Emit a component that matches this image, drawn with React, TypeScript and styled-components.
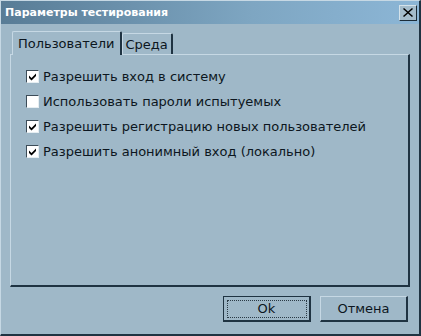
import styled, { createGlobalStyle } from "styled-components";

const GlobalStyle = createGlobalStyle`
  html, body {
    margin: 0;
    padding: 0;
    background: #9fb8c8;
  }
  * {
    box-sizing: border-box;
  }
`;

const Window = styled.div`
  width: 421px;
  height: 336px;
  display: flex;
  flex-direction: column;
  background: #9fb8c8;
  border-top: 1px solid #c6d8e4;
  border-left: 1px solid #c6d8e4;
  border-right: 2px solid #1f3342;
  border-bottom: 2px solid #1f3342;
  font-family: "DejaVu Sans", Verdana, sans-serif;
  color: #0c1620;
`;

const TitleBar = styled.div`
  height: 23px;
  display: flex;
  align-items: center;
  justify-content: space-between;
  padding: 0 2px 0 4px;
  background: linear-gradient(to right, #587c96, #7ea6c2 60%, #8cb6d6);
`;

const Title = styled.span`
  color: #ffffff;
  font-weight: bold;
  font-size: 11px;
`;

const CloseButton = styled.div`
  width: 18px;
  height: 16px;
  display: flex;
  align-items: center;
  justify-content: center;
  background: #a4bccb;
  border-top: 1px solid #d4e2ea;
  border-left: 1px solid #d4e2ea;
  border-right: 1px solid #1c2c38;
  border-bottom: 1px solid #1c2c38;
`;

const Body = styled.div`
  flex: 1;
  display: flex;
  flex-direction: column;
  padding: 6px 9px 0 9px;
`;

const TabRow = styled.div`
  display: flex;
  align-items: flex-end;
  height: 24px;
  padding-left: 2px;
`;

const Tab = styled.div<{ $active?: boolean }>`
  height: ${(p) => (p.$active ? "24px" : "21px")};
  display: flex;
  align-items: center;
  padding: 0 ${(p) => (p.$active ? "5px" : "3px")};
  font-size: 13px;
  border-top: 1px solid #c6d8e4;
  border-left: 1px solid #c6d8e4;
  border-right: 2px solid #1f3342;
  border-radius: 2px 2px 0 0;
  margin-bottom: ${(p) => (p.$active ? "-1px" : "0")};
  background: #9fb8c8;
  position: relative;
  z-index: ${(p) => (p.$active ? 1 : 0)};
`;

const Panel = styled.div`
  height: 233px;
  width: 400px;
  display: flex;
  flex-direction: column;
  gap: 9px;
  padding: 13px 0 0 15px;
  border-top: 1px solid #c6d8e4;
  border-left: 1px solid #c6d8e4;
  border-right: 2px solid #1f3342;
  border-bottom: 2px solid #1f3342;
`;

const Row = styled.label`
  display: flex;
  align-items: center;
  gap: 4px;
  height: 16px;
  font-size: 13px;
`;

const Box = styled.span`
  width: 13px;
  height: 13px;
  display: flex;
  align-items: center;
  justify-content: center;
  background: #ffffff;
  border-top: 1px solid #3c4c58;
  border-left: 1px solid #3c4c58;
  border-right: 1px solid #e6eef2;
  border-bottom: 1px solid #e6eef2;
`;

const Footer = styled.div`
  display: flex;
  justify-content: flex-end;
  gap: 9px;
  padding: 9px 2px 0 0;
`;

const Button = styled.div<{ $default?: boolean }>`
  width: 88px;
  height: 26px;
  display: flex;
  align-items: center;
  justify-content: center;
  font-size: 13px;
  background: #9fb8c8;
  border-top: 1px solid ${(p) => (p.$default ? "#1f3342" : "#c6d8e4")};
  border-left: 1px solid ${(p) => (p.$default ? "#1f3342" : "#c6d8e4")};
  border-right: 2px solid #1f3342;
  border-bottom: 2px solid #1f3342;
`;

const Focus = styled.div`
  width: 80px;
  height: 18px;
  display: flex;
  align-items: center;
  justify-content: center;
  border: 1px dotted #2a3a46;
`;

function Check({ on }: { on: boolean }) {
  return (
    <Box>
      {on && (
        <svg width="9" height="9" viewBox="0 0 9 9">
          <path d="M1 3.5 L3.5 6 L8 1.5 L8 4 L3.5 8.5 L1 6 Z" fill="#000" />
        </svg>
      )}
    </Box>
  );
}

const options = [
  { text: "Разрешить вход в систему", on: true },
  { text: "Использовать пароли испытуемых", on: false },
  { text: "Разрешить регистрацию новых пользователей", on: true },
  { text: "Разрешить анонимный вход (локально)", on: true },
];

export default function App() {
  return (
    <>
      <GlobalStyle />
      <Window>
        <TitleBar>
          <Title>Параметры тестирования</Title>
          <CloseButton>
            <svg width="10" height="9" viewBox="0 0 10 9">
              <path d="M1 0 L5 3.5 L9 0 L10 1 L6 4.5 L10 8 L9 9 L5 5.5 L1 9 L0 8 L4 4.5 L0 1 Z" fill="#000" />
            </svg>
          </CloseButton>
        </TitleBar>
        <Body>
          <TabRow>
            <Tab $active>Пользователи</Tab>
            <Tab>Среда</Tab>
          </TabRow>
          <Panel>
            {options.map((o) => (
              <Row key={o.text}>
                <Check on={o.on} />
                {o.text}
              </Row>
            ))}
          </Panel>
          <Footer>
            <Button $default>
              <Focus>Ok</Focus>
            </Button>
            <Button>Отмена</Button>
          </Footer>
        </Body>
      </Window>
    </>
  );
}
